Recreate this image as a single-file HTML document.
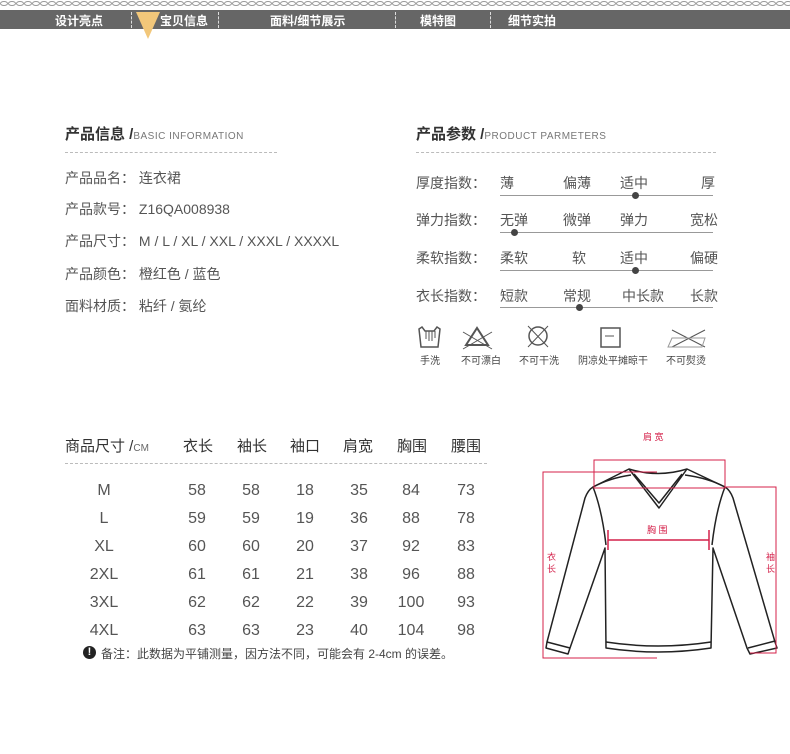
<!DOCTYPE html>
<html><head><meta charset="utf-8">
<style>
*{margin:0;padding:0;box-sizing:border-box}
body{width:790px;height:754px;background:#fff;position:relative;overflow:hidden;font-family:"Liberation Sans","Noto Sans CJK SC",sans-serif;color:#555}
.a{position:absolute;white-space:nowrap}
.nav{position:absolute;left:0;top:10px;width:790px;height:19px;background:#666}
.nav span{position:absolute;top:2px;color:#fff;font-size:12px;font-weight:bold}
.sep{position:absolute;top:12px;height:16px;border-left:1px dashed #ddd}
.h{font-size:15px;font-weight:bold;color:#333}
.h small{font-size:10px;font-weight:normal;color:#777;letter-spacing:.5px}
.dash{position:absolute;height:0;border-top:1px dashed #bbb}
.t{font-size:14px;color:#555}
.line{position:absolute;left:500px;width:213px;height:1px;background:#999}
.dot{position:absolute;width:7px;height:7px;border-radius:50%;background:#444}
.col{position:absolute;top:477px;width:50px;text-align:center;font-size:16px;line-height:28px;color:#555}
.ic{position:absolute;font-size:10px;color:#444}
</style></head><body>
<svg class="a" style="left:0;top:0" width="790" height="8"><defs><pattern id="ch" width="8" height="8" patternUnits="userSpaceOnUse"><ellipse cx="4" cy="3.5" rx="3.5" ry="2" fill="none" stroke="#999" stroke-width="1"/></pattern></defs><rect width="790" height="8" fill="url(#ch)"/></svg>
<div class="nav">
<span style="left:55px">设计亮点</span>
<span style="left:160px">宝贝信息</span>
<span style="left:270px">面料/细节展示</span>
<span style="left:420px">模特图</span>
<span style="left:508px">细节实拍</span>
</div>
<div class="sep" style="left:131px"></div><div class="sep" style="left:218px"></div><div class="sep" style="left:395px"></div><div class="sep" style="left:490px"></div>
<svg class="a" style="left:135px;top:10px" width="26" height="30"><polygon points="1,2 25,2 13,29" fill="#f2c77a"/></svg>

<div class="a h" style="left:65px;top:123px">产品信息 /<small>BASIC INFORMATION</small></div>
<div class="dash" style="left:65px;top:152px;width:212px"></div>
<div class="a t" style="left:65px;top:168px">产品品名：&nbsp;连衣裙</div>
<div class="a t" style="left:65px;top:199px">产品款号：&nbsp;Z16QA008938</div>
<div class="a t" style="left:65px;top:231px">产品尺寸：&nbsp;M / L / XL / XXL / XXXL / XXXXL</div>
<div class="a t" style="left:65px;top:264px">产品颜色：&nbsp;橙红色 / 蓝色</div>
<div class="a t" style="left:65px;top:296px">面料材质：&nbsp;粘纤 / 氨纶</div>

<div class="a h" style="left:416px;top:123px">产品参数 /<small>PRODUCT PARMETERS</small></div>
<div class="dash" style="left:416px;top:152px;width:300px"></div>
<div class="a t" style="left:416px;top:173px">厚度指数：</div>
<div class="a t" style="left:500px;top:173px">薄</div><div class="a t" style="left:563px;top:173px">偏薄</div><div class="a t" style="left:620px;top:173px">适中</div><div class="a t" style="left:701px;top:173px">厚</div>
<div class="line" style="top:195px"></div><div class="dot" style="left:632px;top:192px"></div>
<div class="a t" style="left:416px;top:210px">弹力指数：</div>
<div class="a t" style="left:500px;top:210px">无弹</div><div class="a t" style="left:563px;top:210px">微弹</div><div class="a t" style="left:620px;top:210px">弹力</div><div class="a t" style="left:690px;top:210px">宽松</div>
<div class="line" style="top:232px"></div><div class="dot" style="left:511px;top:229px"></div>
<div class="a t" style="left:416px;top:248px">柔软指数：</div>
<div class="a t" style="left:500px;top:248px">柔软</div><div class="a t" style="left:572px;top:248px">软</div><div class="a t" style="left:620px;top:248px">适中</div><div class="a t" style="left:690px;top:248px">偏硬</div>
<div class="line" style="top:270px"></div><div class="dot" style="left:632px;top:267px"></div>
<div class="a t" style="left:416px;top:286px">衣长指数：</div>
<div class="a t" style="left:500px;top:286px">短款</div><div class="a t" style="left:563px;top:286px">常规</div><div class="a t" style="left:622px;top:286px">中长款</div><div class="a t" style="left:690px;top:286px">长款</div>
<div class="line" style="top:307px"></div><div class="dot" style="left:576px;top:304px"></div>

<svg class="a" style="left:410px;top:322px" width="300" height="30" fill="none" stroke="#555" stroke-width="1.5">
<path d="M9 7 L12 5 L15 9 L24 9 L27 5 L30 7 L28 25 L11 25 Z"/><path d="M16 9 v8 M19 9 v10 M22 9 v10 M25 9 v7" stroke-width="1"/>
<path d="M56 23 L67 6 L78 23 Z" stroke-width="2"/><path d="M53 10 L82 27 M53 27 L82 10" stroke-width="1"/>
<circle cx="128" cy="14" r="9"/><path d="M118 4 L138 25 M118 25 L138 4" stroke-width="1"/>
<rect x="191" y="6" width="19" height="19"/><path d="M195 14 h9" stroke-width="1"/>
<path d="M262 8 L295 25 M262 25 L295 8" stroke-width="1"/><path d="M262 16 L295 16 L292 25 L258 25 Z" stroke="#999" stroke-width="1"/>
</svg>
<div class="ic" style="left:420px;top:352px">手洗</div>
<div class="ic" style="left:461px;top:352px">不可漂白</div>
<div class="ic" style="left:519px;top:352px">不可干洗</div>
<div class="ic" style="left:578px;top:352px">阴凉处平摊晾干</div>
<div class="ic" style="left:666px;top:352px">不可熨烫</div>

<div class="a" style="left:65px;top:435px;font-size:15px;color:#333">商品尺寸 /<span style="font-size:10px;color:#666">CM</span></div>
<div class="a" style="left:183px;top:435px;font-size:15px;color:#333">衣长</div>
<div class="a" style="left:237px;top:435px;font-size:15px;color:#333">袖长</div>
<div class="a" style="left:290px;top:435px;font-size:15px;color:#333">袖口</div>
<div class="a" style="left:343px;top:435px;font-size:15px;color:#333">肩宽</div>
<div class="a" style="left:397px;top:435px;font-size:15px;color:#333">胸围</div>
<div class="a" style="left:451px;top:435px;font-size:15px;color:#333">腰围</div>
<div class="dash" style="left:65px;top:463px;width:422px"></div>
<div class="col" style="left:79px">M<br>L<br>XL<br>2XL<br>3XL<br>4XL</div>
<div class="col" style="left:172px">58<br>59<br>60<br>61<br>62<br>63</div>
<div class="col" style="left:226px">58<br>59<br>60<br>61<br>62<br>63</div>
<div class="col" style="left:280px">18<br>19<br>20<br>21<br>22<br>23</div>
<div class="col" style="left:334px">35<br>36<br>37<br>38<br>39<br>40</div>
<div class="col" style="left:386px">84<br>88<br>92<br>96<br>100<br>104</div>
<div class="col" style="left:441px">73<br>78<br>83<br>88<br>93<br>98</div>
<div class="a" style="left:83px;top:646px;width:13px;height:13px;border-radius:50%;background:#222;color:#fff;font-size:11px;font-weight:bold;text-align:center;line-height:13px">!</div>
<div class="a" style="left:101px;top:645px;font-size:12px;color:#444">备注：此数据为平铺测量，因方法不同，可能会有 2-4cm 的误差。</div>

<svg class="a" style="left:530px;top:420px" width="260" height="250">
<g fill="none" stroke="#222" stroke-width="1.5" stroke-linejoin="round">
<path d="M99 49 Q128 58 157 49 L195 67 Q200 70 203 78 L245 222 L247 228 L220 234 L217 228 L183 128 L181 228 Q128 236 76 228 L75 128 L40 228 L38 234 L16 228 L17 222 L55 78 Q58 70 63 67 Z"/>
<path d="M99 49 L129 88 L157 49 M104 54 L129 83 L152 54"/>
<path d="M63 67 Q80 58 101 55 M195 67 Q178 58 155 55"/>
<path d="M63 67 Q72 90 76 125 M195 67 Q186 90 182 125"/>
<path d="M17 222 L40 228 M218 228 L245 221 M76 222 Q128 230 181 222"/>
</g>
<g fill="none" stroke="#d4204a" stroke-width="1">
<rect x="64" y="40" width="131" height="28"/>
<path d="M127 52 L13 52 L13 238 L127 238"/>
<path d="M195 67 L246 67 L246 233 L220 233"/>
<path d="M78 120 L179 120 M78 110 v20 M179 110 v20" stroke-width="1.5"/>
</g>
<g fill="#d4204a" font-size="9" font-family="Liberation Sans,Noto Sans CJK SC,sans-serif">
<text x="113" y="20">肩 宽</text>
<text x="117" y="113">胸 围</text>
<text x="17" y="140">衣</text><text x="17" y="152">长</text>
<text x="236" y="140">袖</text><text x="236" y="152">长</text>
</g>
</svg>
</body></html>
